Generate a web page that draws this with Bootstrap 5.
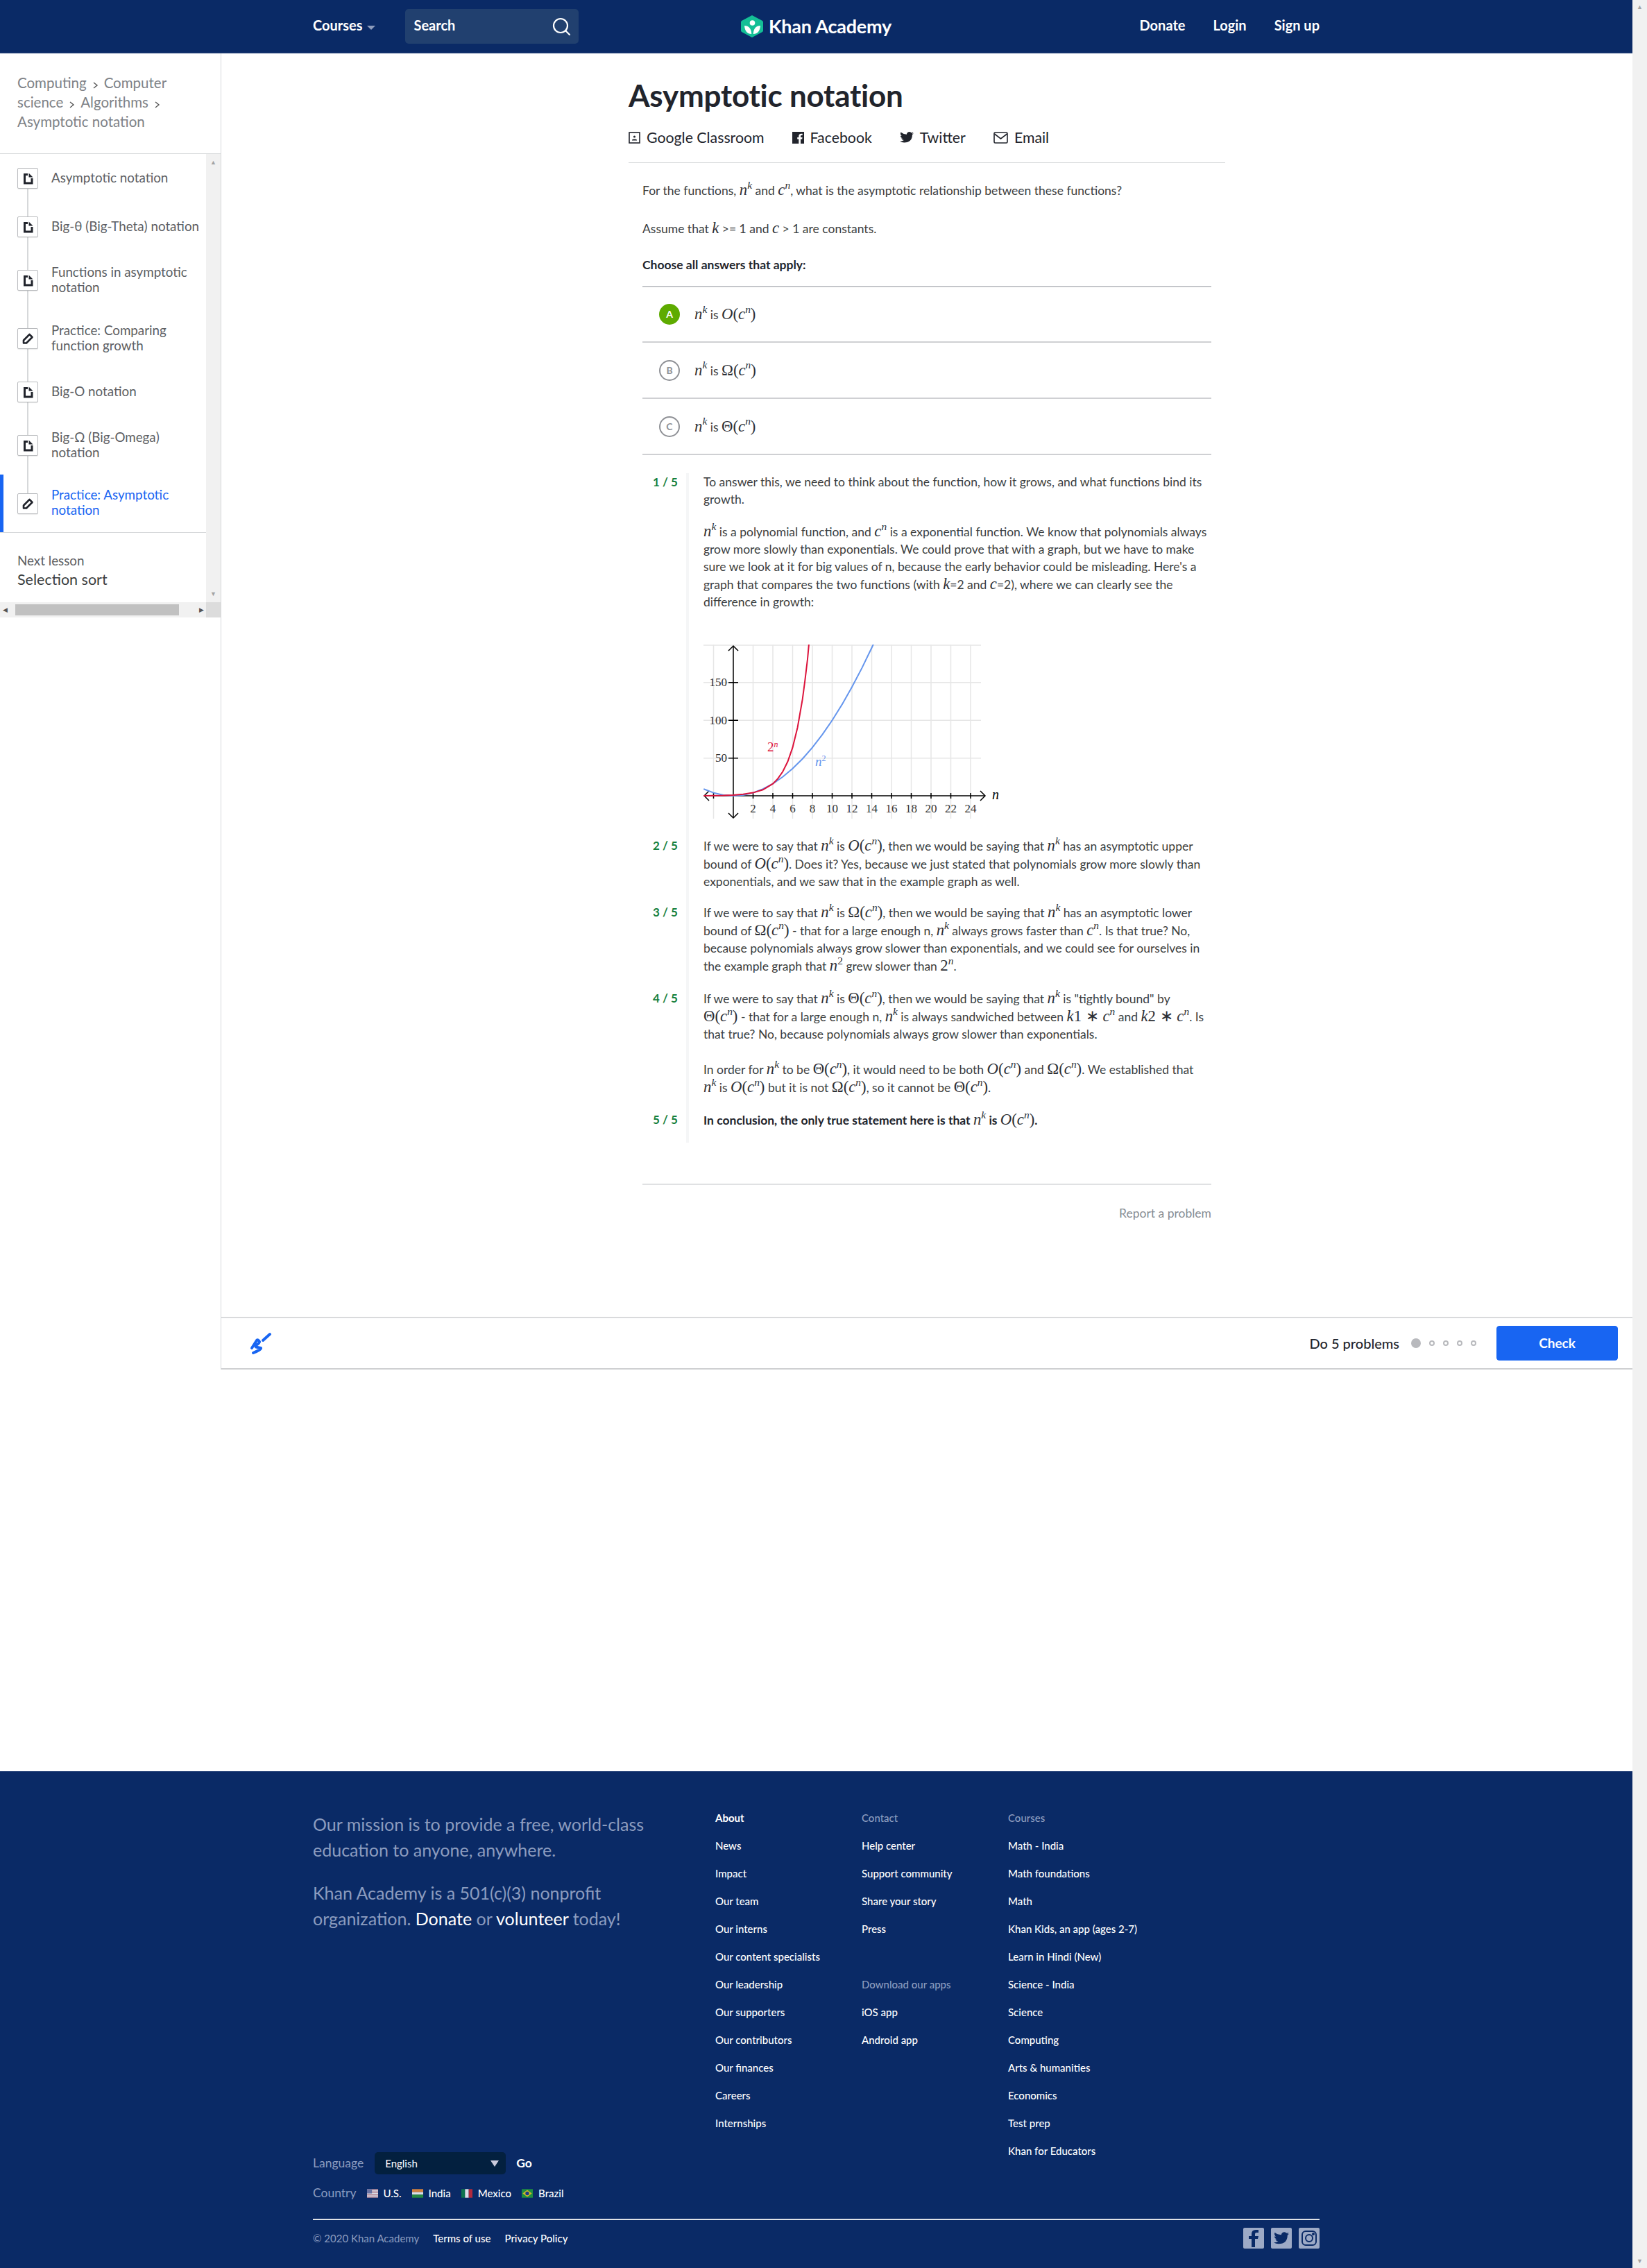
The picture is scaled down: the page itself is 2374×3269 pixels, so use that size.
<!doctype html>
<html lang="en"><head><meta charset="utf-8"><title>Asymptotic notation</title>
<link href="https://cdn.jsdelivr.net/npm/bootstrap@5.3.0/dist/css/bootstrap.min.css" rel="stylesheet">
<style>
html,body{margin:0;height:3269px;overflow:hidden}
body{font-family:Lato,"Open Sans",sans-serif;color:#21242c;background:#fff}
a{color:inherit;text-decoration:none}
.pg{width:2353px;flex:none}
.vtrack{width:21px;flex:none;background:#f1f1f1;height:3269px;color:#a3a3a3;font-size:9px;padding:5px 0;text-align:center;line-height:10px}
.hdr{height:77px;background:#0a2a66;border-bottom:1px solid #3b5486;color:#fff;font-weight:700;font-size:20px}
.hwrap{width:1451px;margin:0 auto;height:76px}
.hside{flex:1 1 0}
.htx{padding-bottom:5px;display:inline-block}
.caret{display:inline-block;border:6px solid transparent;border-top:6px solid #8d9cbc;border-bottom:0;margin-left:7px;vertical-align:1px}
.srch{width:250px;height:50px;background:#21406f;border-radius:5px;margin-left:43px;padding:0 12px}
.lgtxt{font-size:27px;font-weight:700;letter-spacing:-.2px}
.hl+.hl{margin-left:40px}
.shell{min-height:1897px}
.side{width:319px;flex:none;border-right:1px solid #d6d8da}
.crumb{height:145px;border-bottom:1px solid #d6d8da;padding:28px 0 0 25px;font-size:20.5px;line-height:28px;color:#7e8287}
.crumb svg{margin:0 7px 0 8px;vertical-align:-3px}
.slist{width:297px;flex:none}
.sbar{width:21px;flex:none;background:#f1f1f1;color:#a3a3a3;font-size:9px;line-height:10px;text-align:center;padding:7px 0}
.lsn{position:relative;padding-left:25px;height:70px;font-size:18.8px;line-height:22px;color:#5c5e63}
.lsn.two{height:84px}
.lsn>span:last-child{padding-bottom:3px}
.lsn::before{content:"";position:absolute;left:39px;width:2px;top:0;bottom:0;background:#d6d8da}
.lsn.first::before{top:50%}
.lsn.last::before{bottom:50%}
.lsn.last{color:#1865f2;box-shadow:inset 5px 0 0 #1865f2;border-bottom:1px solid #d6d8da}
.ibox{width:30px;height:30px;flex:none;border:1px solid #b8babd;border-radius:2px;background:#fff;position:relative;margin-right:19px;box-shadow:0 1px 1px rgba(0,0,0,.08)}
.ibox svg{display:block}
.nxt{height:100px;padding:29px 0 0 25px;color:#5c5e63}
.nxt .a1{font-size:18.8px;line-height:22px}
.nxt .a2{font-size:21.5px;line-height:32px;color:#3b3e40}
.hscroll{height:22px;background:#f1f1f1;width:318px;color:#555;font-size:9px}
.hthumb{width:236px;height:16px;background:#c1c1c1;margin:0 29px 0 11px}
.hcorner{width:21px;height:22px;background:#dcdcdc;margin-left:auto}
.mainc{flex:1 1 0;min-width:0}
.art{width:860px;margin:0 auto}
.ttl{font-size:44px;font-weight:700;line-height:56px;margin:0;padding-top:32px;padding-bottom:2px;color:#21242c;letter-spacing:-.25px}
.shr{height:68px;font-size:21.3px;color:#21242c;border-bottom:1px solid #d6d8da;padding-top:17px}
.shi{display:flex;align-items:center;margin-right:40px;line-height:28px}
.shi svg{margin-right:9px}
.qbody{width:820px;margin:0 auto;font-size:17.5px;line-height:25px;color:#3b3e40}
.qp{margin:0}
.mth{font-family:"Liberation Serif",serif;font-size:1.3em;white-space:nowrap;color:#2d3036}
.mth sup{font-size:.68em;top:-.6em}
.ch{height:81px;border-bottom:2px solid #cfd0d3;padding-left:24px;font-size:17.5px}
.ch.t{border-top:2px solid #c4c6ca;height:82px}
.cc{width:30px;height:30px;border-radius:50%;border:2.5px solid #8f9196;color:#8f9196;font-size:14px;font-weight:700;margin-right:21px;line-height:1}
.cc.on{background:#5eab00;border-color:#5eab00;color:#fff}
.hrow{display:flex}
.hnum{width:48px;padding-left:15px;flex:none;color:#15803d;font-weight:700;font-size:17px;white-space:nowrap;box-sizing:content-box}
.hbody{margin-left:0;padding-left:21px;border-left:4px solid #f5f6f7;width:757px}
.hbody p{margin:0 0 21px}
.gph{display:block;margin:0}
.rep{width:820px;margin:0 auto;border-top:2px solid #e0e1e3;padding-top:28px;text-align:right;color:#888d93;font-size:17.5px;line-height:25px}
.bar{height:76px;border-top:2px solid #d9dadc;border-bottom:2px solid #cfd0d2;padding:0 21px 0 39px}
.dot{width:8px;height:8px;border:2px solid #b8b9bd;border-radius:50%;margin-left:12px}
.dot.on{width:14px;height:14px;background:#b8b9bd;margin-left:17px}
.btn.chk{width:175px;height:50px;background:#1865f2;border-color:#1865f2;color:#fff;font-weight:700;font-size:19px;margin-left:29px;border-radius:4px}
.gap{height:579px}
.ft{background:#0a2a66;height:716px;color:#fff}
.fwrap{width:1451px;margin:0 auto;padding-top:47px}
.ftop{height:598px}
.fl{width:580px;flex:none;padding-bottom:27px}
.miss{font-size:25px;line-height:37px;color:#8c9cbf;padding-top:11px}
.miss p{margin:0 0 25px;width:500px}
.miss a{color:#fff}
.fc{width:211px;flex:none;font-size:15px;font-weight:500;line-height:40px;white-space:nowrap}
.fc .h{color:#8c9cbf}
.fc .w{color:#fff;font-weight:700}
.fc .sp{height:40px}
.lang{font-size:17.500px;color:#8c9cbf}
.form-select.lsel{width:189px;height:32px;padding:0 0 0 15px;margin:0 15px 0 16px;background-color:#03203f;color:#fff;border:0;border-radius:5px;font-size:15px;font-family:Lato,sans-serif;background-image:url("data:image/svg+xml,%3Csvg xmlns='http://www.w3.org/2000/svg' viewBox='0 0 12 9'%3E%3Cpath d='M0 0h12L6 9z' fill='%23ccd'/%3E%3C/svg%3E");background-size:12px 9px;background-position:right 10px center}
.go{color:#fff;font-weight:700;font-size:17.500px}
.ctry{font-size:17.500px;color:#8c9cbf;margin-top:17px;line-height:20px;height:20px}
.ctry .cf{font-size:15px;font-weight:500;color:#fff;margin-left:15px;display:flex;align-items:center}
.ctry svg{margin-right:8px;opacity:.85}
.fbot{border-top:2px solid #e0e2e6;height:54px;font-size:15px}
.fbot .c{color:#8c9cbf;margin-right:20px}
.fbot .l{color:#fff;margin-right:20px;font-weight:500}
.soc{width:30px;height:30px;background:#9daac6;border-radius:2px;margin-left:10px}
</style></head>
<body class="d-flex">
<div class="pg">
<header class="hdr">
 <div class="hwrap d-flex align-items-center">
  <div class="hside d-flex align-items-center">
   <a href="#" class="htx">Courses<span class="caret"></span></a>
   <div class="srch d-flex align-items-center justify-content-between"><span class="htx">Search</span>
    <svg width="26" height="26" viewBox="0 0 26 26" fill="none" stroke="#fff" stroke-width="2.2"><circle cx="12" cy="12" r="10"/><path d="M19 19l6 6" stroke-linecap="round"/></svg></div>
  </div>
  <a href="#" class="d-flex align-items-center">
   <svg width="32" height="34" viewBox="0 0 32 32" class="me-2"><path d="M16 0L31 8Q32 9 32 10V22Q32 23 31 24L16 32L1 24Q0 23 0 22V10Q0 9 1 8Z" fill="#14bf96"/><circle cx="16.5" cy="11" r="3.8" fill="#fff"/><path d="M5 15Q14.5 15 15.3 27Q6 27 5 15ZM28 15Q18.5 15 17.7 27Q27 27 28 15Z" fill="#fff"/></svg>
   <span class="lgtxt">Khan Academy</span></a>
  <div class="hside d-flex justify-content-end"><a class="hl htx" href="#">Donate</a><a class="hl htx" href="#">Login</a><a class="hl htx" href="#">Sign up</a></div>
 </div>
</header>
<div class="shell d-flex">
 <aside class="side">
  <div class="crumb">Computing<svg width="10" height="14" viewBox="0 0 10 14" fill="none" stroke="#555" stroke-width="1.4"><path d="M2 3l5 4-5 4"/></svg>Computer<br>science<svg width="10" height="14" viewBox="0 0 10 14" fill="none" stroke="#555" stroke-width="1.4"><path d="M2 3l5 4-5 4"/></svg>Algorithms<svg width="10" height="14" viewBox="0 0 10 14" fill="none" stroke="#555" stroke-width="1.4"><path d="M2 3l5 4-5 4"/></svg><br>Asymptotic notation</div>
  <div class="d-flex">
   <div class="slist">
    <a href="#" class="lsn first d-flex align-items-center"><span class="ibox"><svg width="28" height="28" viewBox="0 0 28 28"><path d="M14 8.5H9.5V21H20V14" fill="none" stroke="#21242c" stroke-width="3"/><path d="M15.5 6.5L21.5 12.5H15.5Z" fill="#21242c"/></svg></span><span>Asymptotic notation</span></a>
    <a href="#" class="lsn d-flex align-items-center"><span class="ibox"><svg width="28" height="28" viewBox="0 0 28 28"><path d="M14 8.5H9.5V21H20V14" fill="none" stroke="#21242c" stroke-width="3"/><path d="M15.5 6.5L21.5 12.5H15.5Z" fill="#21242c"/></svg></span><span class="text-nowrap">Big-θ (Big-Theta) notation</span></a>
    <a href="#" class="lsn two d-flex align-items-center"><span class="ibox"><svg width="28" height="28" viewBox="0 0 28 28"><path d="M14 8.5H9.5V21H20V14" fill="none" stroke="#21242c" stroke-width="3"/><path d="M15.5 6.5L21.5 12.5H15.5Z" fill="#21242c"/></svg></span><span>Functions in asymptotic<br>notation</span></a>
    <a href="#" class="lsn two d-flex align-items-center"><span class="ibox"><svg width="28" height="28" viewBox="0 0 28 28"><path d="M8 20.5V16.5L16.5 8L20.5 12L12 20.5Z" fill="none" stroke="#21242c" stroke-width="2.6" stroke-linejoin="round"/></svg></span><span>Practice: Comparing<br>function growth</span></a>
    <a href="#" class="lsn d-flex align-items-center"><span class="ibox"><svg width="28" height="28" viewBox="0 0 28 28"><path d="M14 8.5H9.5V21H20V14" fill="none" stroke="#21242c" stroke-width="3"/><path d="M15.5 6.5L21.5 12.5H15.5Z" fill="#21242c"/></svg></span><span>Big-O notation</span></a>
    <a href="#" class="lsn two d-flex align-items-center"><span class="ibox"><svg width="28" height="28" viewBox="0 0 28 28"><path d="M14 8.5H9.5V21H20V14" fill="none" stroke="#21242c" stroke-width="3"/><path d="M15.5 6.5L21.5 12.5H15.5Z" fill="#21242c"/></svg></span><span>Big-Ω (Big-Omega)<br>notation</span></a>
    <a href="#" class="lsn two last d-flex align-items-center"><span class="ibox"><svg width="28" height="28" viewBox="0 0 28 28"><path d="M8 20.5V16.5L16.5 8L20.5 12L12 20.5Z" fill="none" stroke="#21242c" stroke-width="2.6" stroke-linejoin="round"/></svg></span><span>Practice: Asymptotic<br>notation</span></a>
    <div class="nxt"><div class="a1">Next lesson</div><div class="a2">Selection sort</div></div>
   </div>
   <div class="sbar d-flex flex-column justify-content-between"><span>▲</span><span>▼</span></div>
  </div>
  <div class="hscroll d-flex align-items-center"><span class="ps-1">◀</span><div class="hthumb"></div><span>▶</span><div class="hcorner"></div></div>
 </aside>
 <main class="mainc d-flex flex-column">
  <div class="flex-grow-1">
   <div class="art">
    <h1 class="ttl">Asymptotic notation</h1>
    <div class="shr d-flex align-items-start" >
     <a href="#" class="shi"><svg width="17" height="17" viewBox="0 0 17 17"><rect x="1" y="1" width="15" height="15" fill="none" stroke="#21242c" stroke-width="1.6"/><circle cx="8.5" cy="7" r="1.6" fill="#21242c"/><path d="M5 12.5h7v-1l-2-1H7l-2 1z" fill="#21242c"/></svg><span>Google Classroom</span></a>
     <a href="#" class="shi"><svg width="17" height="17" viewBox="0 0 17 17"><path d="M0 0H17V17H12V10.5H14.2L14.6 8H12V6.4Q12 5 13.4 5H14.7V2.7H12.8Q9.3 2.7 9.3 6.2V8H7.2V10.5H9.3V17H0Z" fill="#21242c"/></svg><span>Facebook</span></a>
     <a href="#" class="shi"><svg width="20" height="17" viewBox="0 0 20 17"><path d="M20 2.2Q19 2.7 17.7 2.9Q19 2 19.5 .5Q18.300 1.200 17 1.500Q15.700 0 13.900 0Q10.600 0 9.800 3.700Q4.700 3.500 1.400 .6Q0 3.700 2.700 6Q1.700 6 .9 5.500Q1 8.500 4 9.300Q3 9.500 2.100 9.300Q3 11.800 5.900 12Q3.300 14 0 13.800Q2.800 15.500 6.300 15.500Q17.800 15.500 18 4.100Q19.200 3.300 20 2.200Z" fill="#21242c"/></svg><span>Twitter</span></a>
     <a href="#" class="shi"><svg width="21" height="17" viewBox="0 0 21 17"><rect x="1" y="1" width="19" height="15" rx="1.500" fill="none" stroke="#21242c" stroke-width="1.600"/><path d="M1.500 3l9 7 9-7" fill="none" stroke="#21242c" stroke-width="1.600"/></svg><span>Email</span></a>
    </div>
    <div class="qbody">
     <p class="qp" style="padding-top:26px">For the functions, <span class="mth"><i>n<sup>k</sup></i></span> and <span class="mth"><i>c<sup>n</sup></i></span>, what is the asymptotic relationship between these functions?</p>
     <p class="qp" style="padding-top:29px">Assume that <span class="mth"><i>k</i></span> &gt;= 1 and <span class="mth"><i>c</i></span> &gt; 1 are constants.</p>
     <p class="qp fw-bold" style="padding-top:27px;padding-bottom:18px;color:#21242c">Choose all answers that apply:</p>
     <div class="ch t d-flex align-items-center"><span class="cc on d-flex align-items-center justify-content-center">A</span><span><span class="mth"><i>n<sup>k</sup></i></span> is <span class="mth"><i>O</i>(<i>c<sup>n</sup></i>)</span></span></div>
     <div class="ch d-flex align-items-center"><span class="cc d-flex align-items-center justify-content-center">B</span><span><span class="mth"><i>n<sup>k</sup></i></span> is <span class="mth">Ω(<i>c<sup>n</sup></i>)</span></span></div>
     <div class="ch d-flex align-items-center"><span class="cc d-flex align-items-center justify-content-center">C</span><span><span class="mth"><i>n<sup>k</sup></i></span> is <span class="mth">Θ(<i>c<sup>n</sup></i>)</span></span></div>
     <div class="hrow" style="margin-top:26px"><div class="hnum">1 / 5</div><div class="hbody">
       <p>To answer this, we need to think about the function, how it grows, and what functions bind its growth.</p>
       <p style="margin-bottom:49px"><span class="mth"><i>n<sup>k</sup></i></span> is a polynomial function, and <span class="mth"><i>c<sup>n</sup></i></span> is a exponential function. We know that polynomials always grow more slowly than exponentials. We could prove that with a graph, but we have to make sure we look at it for big values of n, because the early behavior could be misleading. Here's a graph that compares the two functions (with <span class="mth"><i>k</i></span>=2 and <span class="mth"><i>c</i></span>=2), where we can clearly see the difference in growth:</p>
       <svg class="gph" width="440" height="252" viewBox="0 0 440 252" font-family="Liberation Serif, serif" font-size="17">
        <g stroke="#e6e6e6" stroke-width="1.500" fill="none"><path d="M0 1H400M0 54.700H400M0 109.300H400M0 163.700H400"/><path d="M14.500 0V251M71.500 0V251M100 0V251M128.500 0V251M157 0V251M185.500 0V251M214 0V251M242.500 0V251M271 0V251M299.500 0V251M328 0V251M356.500 0V251M385 0V251"/></g>
        <g stroke="#000" stroke-width="1.500" fill="none"><path d="M43 2V250M1 218H406"/><path d="M36 9L43 2L50 9M36 243L43 250L50 243M8 211L1 218L8 225M399 211L406 218L399 225"/><path d="M14.500 214V222M71.500 214V222M100 214V222M128.500 214V222M157 214V222M185.500 214V222M214 214V222M242.500 214V222M271 214V222M299.500 214V222M328 214V222M356.500 214V222M385 214V222M36 54.700H50M36 109.300H50M36 163.700H50"/></g>
        <path d="M.25 208.200L14.500 213.600L28.750 216.900L43 218L57.250 216.900L71.500 213.600L85.750 208.200L100 200.600L114.250 190.800L128.500 178.800L142.750 164.700L157 148.400L171.250 129.900L185.500 109.200L199.750 86.400L214 61.300L228.250 34.100L242.500 4.800L245.350 -1.400" fill="none" stroke="#6495ed" stroke-width="2"/>
        <path d="M.25 217.900L28.750 217.500L43 216.900L57.250 215.800L71.500 213.600L85.750 209.300L100 200.600L107.100 193.400L114.250 183.200L121.400 168.800L128.500 148.400L135.600 119.500L142.750 78.700L146.300 51.900L150 21L152 -1" fill="none" stroke="#dc143c" stroke-width="2"/>
        <g fill="#333" text-anchor="middle"><text x="71.500" y="242">2</text><text x="100" y="242">4</text><text x="128.500" y="242">6</text><text x="157" y="242">8</text><text x="185.500" y="242">10</text><text x="214" y="242">12</text><text x="242.500" y="242">14</text><text x="271" y="242">16</text><text x="299.500" y="242">18</text><text x="328" y="242">20</text><text x="356.500" y="242">22</text><text x="385" y="242">24</text></g>
        <g fill="#333" text-anchor="end"><text x="34" y="60">150</text><text x="34" y="115">100</text><text x="34" y="169">50</text></g>
        <text x="92" y="154" fill="#dc143c" font-size="19">2<tspan font-size="12" dy="-6" font-style="italic">n</tspan></text>
        <text x="161" y="175" fill="#6495ed" font-size="19" font-style="italic">n<tspan font-size="12" dy="-7" font-style="normal">2</tspan></text>
        <text x="416" y="223" font-size="20" font-style="italic">n</text>
       </svg>
       <div style="height:25px"></div>
     </div></div>
     <div class="hrow"><div class="hnum">2 / 5</div><div class="hbody"><p style="margin-bottom:19px">If we were to say that <span class="mth"><i>n<sup>k</sup></i></span> is <span class="mth"><i>O</i>(<i>c<sup>n</sup></i>)</span>, then we would be saying that <span class="mth"><i>n<sup>k</sup></i></span> has an asymptotic upper bound of <span class="mth"><i>O</i>(<i>c<sup>n</sup></i>)</span>. Does it? Yes, because we just stated that polynomials grow more slowly than exponentials, and we saw that in the example graph as well.</p></div></div>
     <div class="hrow"><div class="hnum">3 / 5</div><div class="hbody"><p>If we were to say that <span class="mth"><i>n<sup>k</sup></i></span> is <span class="mth">Ω(<i>c<sup>n</sup></i>)</span>, then we would be saying that <span class="mth"><i>n<sup>k</sup></i></span> has an asymptotic lower bound of <span class="mth">Ω(<i>c<sup>n</sup></i>)</span> - that for a large enough n, <span class="mth"><i>n<sup>k</sup></i></span> always grows faster than <span class="mth"><i>c<sup>n</sup></i></span>. Is that true? No, because polynomials always grow slower than exponentials, and we could see for ourselves in the example graph that <span class="mth"><i>n</i><sup>2</sup></span> grew slower than <span class="mth">2<sup><i>n</i></sup></span>.</p></div></div>
     <div class="hrow"><div class="hnum">4 / 5</div><div class="hbody"><p style="margin-bottom:25px">If we were to say that <span class="mth"><i>n<sup>k</sup></i></span> is <span class="mth">Θ(<i>c<sup>n</sup></i>)</span>, then we would be saying that <span class="mth"><i>n<sup>k</sup></i></span> is "tightly bound" by<br><span class="mth">Θ(<i>c<sup>n</sup></i>)</span> - that for a large enough n, <span class="mth"><i>n<sup>k</sup></i></span> is always sandwiched between <span class="mth"><i>k</i>1 ∗ <i>c<sup>n</sup></i></span> and <span class="mth"><i>k</i>2 ∗ <i>c<sup>n</sup></i></span>. Is<br>that true? No, because polynomials always grow slower than exponentials.</p>
       <p>In order for <span class="mth"><i>n<sup>k</sup></i></span> to be <span class="mth">Θ(<i>c<sup>n</sup></i>)</span>, it would need to be both <span class="mth"><i>O</i>(<i>c<sup>n</sup></i>)</span> and <span class="mth">Ω(<i>c<sup>n</sup></i>)</span>. We established that<br><span class="mth"><i>n<sup>k</sup></i></span> is <span class="mth"><i>O</i>(<i>c<sup>n</sup></i>)</span> but it is not <span class="mth">Ω(<i>c<sup>n</sup></i>)</span>, so it cannot be <span class="mth">Θ(<i>c<sup>n</sup></i>)</span>.</p></div></div>
     <div class="hrow"><div class="hnum">5 / 5</div><div class="hbody"><p class="fw-bold" style="color:#21242c;margin-bottom:20px">In conclusion, the only true statement here is that <span class="mth fw-normal"><i>n<sup>k</sup></i></span> is <span class="mth fw-normal"><i>O</i>(<i>c<sup>n</sup></i>)</span>.</p></div></div>
    </div>
    <div class="rep" style="margin-top:59px"><a href="#">Report a problem</a></div>
   </div>
  </div>
  <div class="bar d-flex align-items-center">
   <svg width="40" height="40" viewBox="8 6 40 40" fill="none" stroke="#1865f2" stroke-width="4" stroke-linecap="round" stroke-linejoin="round"><path d="M13 33L20 22Q22 20 24 24Q24 26 19 29Q17 32 21 32L26 33Q27 35 15 40"/><path d="M29 22L39 13"/></svg>
   <div class="ms-auto fw-medium" style="font-size:20px">Do 5 problems</div>
   <span class="dot on"></span><span class="dot"></span><span class="dot"></span><span class="dot"></span><span class="dot"></span>
   <button class="btn btn-primary chk">Check</button>
  </div>
 </main>
</div>
<div class="gap"></div>
<footer class="ft">
 <div class="fwrap">
  <div class="ftop d-flex">
   <div class="fl d-flex flex-column justify-content-between">
    <div class="miss"><p>Our mission is to provide a free, world-class education to anyone, anywhere.</p><p>Khan Academy is a 501(c)(3) nonprofit organization. <a href="#">Donate</a> or <a href="#">volunteer</a> today!</p></div>
    <div>
     <div class="lang d-flex align-items-center"><span>Language</span><select class="form-select lsel"><option>English</option></select><a href="#" class="go">Go</a></div>
     <div class="ctry d-flex align-items-center"><span>Country</span>
      <a href="#" class="cf"><svg width="16" height="13" viewBox="0 0 18 14"><rect width="18" height="14" fill="#d9a6ad"/><path d="M0 3h18M0 7h18M0 11h18" stroke="#fff" stroke-width="1.500"/><rect width="8" height="7" fill="#7a7fae"/></svg>U.S.</a>
      <a href="#" class="cf"><svg width="16" height="13" viewBox="0 0 18 14"><rect width="18" height="5" fill="#f6923a"/><rect y="5" width="18" height="4" fill="#fff"/><rect y="9" width="18" height="5" fill="#2a9a3c"/></svg>India</a>
      <a href="#" class="cf"><svg width="16" height="13" viewBox="0 0 18 14"><rect width="6" height="14" fill="#10804a"/><rect x="6" width="6" height="14" fill="#fff"/><rect x="12" width="6" height="14" fill="#ce2b37"/></svg>Mexico</a>
      <a href="#" class="cf"><svg width="16" height="13" viewBox="0 0 18 14"><rect width="18" height="14" fill="#22a03c"/><path d="M9 1.500L16.500 7L9 12.500L1.500 7Z" fill="#f3d21d"/><circle cx="9" cy="7" r="3" fill="#1d3f8f"/></svg>Brazil</a>
     </div>
    </div>
   </div>
   <div class="fc"><div class="w">About</div><div>News</div><div>Impact</div><div>Our team</div><div>Our interns</div><div>Our content specialists</div><div>Our leadership</div><div>Our supporters</div><div>Our contributors</div><div>Our finances</div><div>Careers</div><div>Internships</div></div>
   <div class="fc"><div class="h">Contact</div><div>Help center</div><div>Support community</div><div>Share your story</div><div>Press</div><div class="sp"></div><div class="h">Download our apps</div><div>iOS app</div><div>Android app</div></div>
   <div class="fc"><div class="h">Courses</div><div>Math - India</div><div>Math foundations</div><div>Math</div><div>Khan Kids, an app (ages 2-7)</div><div>Learn in Hindi (New)</div><div>Science - India</div><div>Science</div><div>Computing</div><div>Arts &amp; humanities</div><div>Economics</div><div>Test prep</div><div>Khan for Educators</div></div>
  </div>
  <div class="fbot d-flex align-items-center">
   <span class="c">© 2020 Khan Academy</span><a class="l" href="#">Terms of use</a><a class="l" href="#">Privacy Policy</a>
   <a href="#" class="soc ms-auto d-flex align-items-center justify-content-center"><svg width="16" height="26" viewBox="0 0 16 26"><path d="M5 26V14H1V10H5V7Q5 1 11 1H15V5H12Q10 5 10 7V10H15L14 14H10V26Z" fill="#0a2a66"/></svg></a>
   <a href="#" class="soc d-flex align-items-center justify-content-center"><svg width="22" height="19" viewBox="0 0 20 17"><path d="M20 2.200Q19 2.700 17.700 2.900Q19 2 19.500 .5Q18.300 1.200 17 1.500Q15.700 0 13.900 0Q10.600 0 9.800 3.700Q4.700 3.500 1.400 .6Q0 3.700 2.700 6Q1.700 6 .9 5.500Q1 8.500 4 9.300Q3 9.500 2.100 9.300Q3 11.800 5.900 12Q3.300 14 0 13.800Q2.800 15.500 6.300 15.500Q17.800 15.500 18 4.100Q19.200 3.300 20 2.200Z" fill="#0a2a66"/></svg></a>
   <a href="#" class="soc d-flex align-items-center justify-content-center"><svg width="24" height="24" viewBox="0 0 24 24" fill="none" stroke="#0a2a66" stroke-width="2"><rect x="2" y="2" width="20" height="20" rx="5"/><circle cx="12" cy="12" r="5"/><circle cx="18" cy="6" r="1" fill="#0a2a66"/></svg></a>
  </div>
 </div>
</footer>
</div>
<div class="vtrack d-flex flex-column justify-content-between"><span>▲</span><span>▼</span></div>
</body></html>
